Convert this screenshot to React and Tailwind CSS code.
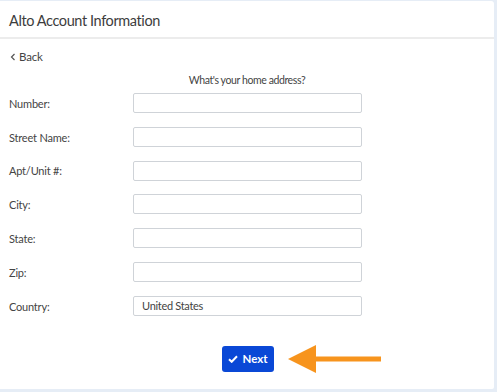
import React from "react";

const fields = [
  ["Number:", ""],
  ["Street Name:", ""],
  ["Apt/Unit #:", ""],
  ["City:", ""],
  ["State:", ""],
  ["Zip:", ""],
  ["Country:", "United States"],
];

export default function App() {
  return (
    <div className="w-[497px] h-[392px] bg-[#e6edf6] pt-[1px] overflow-hidden" style={{ fontFamily: "Lato, 'Open Sans', sans-serif" }}>
      <div className="w-[494px] h-[388px] bg-white rounded-tr-[3px] rounded-br-[2px]">
        <div className="h-[38px] pt-[4px] flex items-center pl-[9px] text-[14.5px] tracking-[-0.4px] text-[#3d3d3d] border-b-2 border-[#ececec]">
          Alto Account Information
        </div>
        <div className="pt-[9px]">
          <div className="flex items-center h-[16px] pt-[1px] pl-[10px] text-[11.5px] tracking-[-0.2px] text-[#444]">
            <svg width="6" height="8" viewBox="0 0 6 8" className="mr-[3px]">
              <path d="M4.5 1 L1.5 4 L4.5 7" fill="none" stroke="#555" strokeWidth="1.2" />
            </svg>
            Back
          </div>
          <div className="mt-[7px] h-[16px] pt-[3px] flex items-center justify-center text-[10.5px] tracking-[-0.4px] text-[#444]">
            What's your home address?
          </div>
          <div className="mt-[6px] flex flex-col gap-[13.8px]">
            {fields.map(([label, val]) => (
              <div key={label} className="flex items-center h-[20px]">
                <div className="w-[133px] pl-[9px] pt-[2px] text-[11px] tracking-[-0.2px] text-[#444]">{label}</div>
                <div className="w-[229px] h-[20px] border border-[#cfd3d8] rounded-[2px] flex items-center pl-[8px] text-[11px] tracking-[-0.3px] text-[#444]">
                  {val}
                </div>
              </div>
            ))}
          </div>
          <div className="mt-[28px] flex items-center">
            <div className="w-[222px]" />
            <button className="w-[52px] h-[26px] bg-[#0a48d6] rounded-[3px] flex items-center justify-center gap-[4px] text-white text-[11.5px] font-bold">
              <svg width="10" height="8" viewBox="0 0 10 8">
                <path d="M1 4.2 L3.7 6.8 L9 1.3" fill="none" stroke="white" strokeWidth="2" />
              </svg>
              Next
            </button>
            <svg width="96" height="30" viewBox="0 0 96 30" className="ml-[13px]">
              <polygon points="1,15 29,1 29,29" fill="#f7941d" />
              <rect x="28" y="12.5" width="66" height="5" fill="#f7941d" />
            </svg>
          </div>
        </div>
      </div>
    </div>
  );
}
